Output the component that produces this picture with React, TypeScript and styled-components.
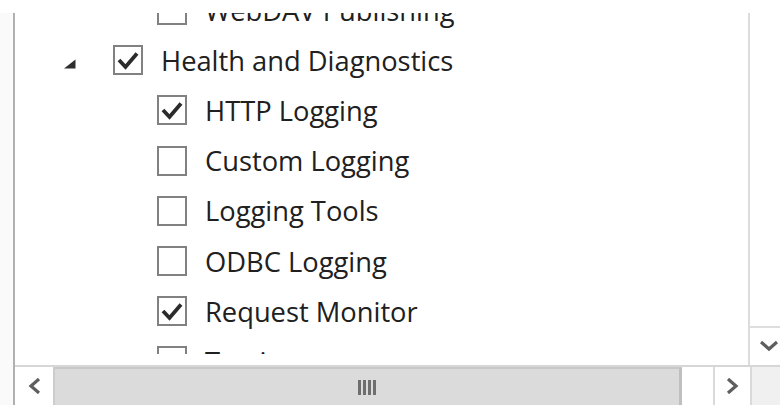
import React from "react";
import styled, { createGlobalStyle } from "styled-components";

const GlobalStyle = createGlobalStyle`
  html, body {
    margin: 0;
    padding: 0;
    background: #ffffff;
  }
  body {
    font-family: "Open Sans", "Noto Sans", "DejaVu Sans", sans-serif;
  }
`;

const Page = styled.div`
  width: 780px;
  height: 405px;
  padding-top: 13px;
  box-sizing: border-box;
  display: flex;
  background: #ffffff;
  overflow: hidden;
`;

const Gutter = styled.div`
  width: 13px;
  flex-shrink: 0;
  background: #fafafa;
`;

const Panel = styled.div`
  flex: 1;
  display: grid;
  grid-template-columns: 735px 1fr;
  grid-template-rows: 1fr 40px;
  border-left: 2px solid #b0b0b0;
  overflow: hidden;
`;

const TreeView = styled.div`
  border-right: 2px solid #dcdcdc;
  padding-bottom: 11px;
  display: flex;
  flex-direction: column;
  min-height: 0;
  background: #ffffff;
`;

const Viewport = styled.div`
  flex: 1;
  overflow: hidden;
`;

// list is scrolled a little, so the first row is half hidden
const TreeList = styled.ul`
  list-style: none;
  margin: -28px 0 0 0;
  padding: 0;
`;

const Row = styled.li<{ $level: number }>`
  height: 50.2px;
  display: flex;
  align-items: center;
  padding-left: ${(p) => 48 + p.$level * 44}px;
  box-sizing: border-box;
`;

const Expander = styled.span`
  width: 50px;
  flex-shrink: 0;
  display: flex;
  align-items: center;
  padding-top: 7px;
`;

const Box = styled.span`
  width: 30px;
  height: 30px;
  flex-shrink: 0;
  box-sizing: border-box;
  border: 2px solid #818181;
  background: #ffffff;
  display: flex;
  align-items: center;
  justify-content: center;
  margin-right: 18px;
`;

const Label = styled.span`
  font-size: 27.3px;
  color: #202020;
  white-space: nowrap;
`;

const VScroll = styled.div`
  display: flex;
  flex-direction: column;
  justify-content: flex-end;
  background: #ffffff;
`;

const DownButton = styled.div`
  height: 37px;
  box-sizing: border-box;
  border-top: 2px solid #dedede;
  display: flex;
  align-items: center;
  padding-left: 10px;
  margin-bottom: 2px;
`;

const HScroll = styled.div`
  display: flex;
  border-top: 2px solid #d6d6d6;
  background: #ffffff;
`;

const ArrowButton = styled.div<{ $width: number }>`
  width: ${(p) => p.$width}px;
  flex-shrink: 0;
  display: flex;
  align-items: center;
  justify-content: center;
  background: #ffffff;
`;

const Track = styled.div`
  flex: 1;
  display: flex;
  border-left: 2px solid #cccccc;
  border-right: 2px solid #dadada;
  background: #ffffff;
`;

const Thumb = styled.div`
  width: 627px;
  box-sizing: border-box;
  background: #dbdbdb;
  border-top: 2px solid #c8c8c8;
  border-right: 3px solid #bfbfbf;
  display: flex;
  align-items: center;
  justify-content: center;
  gap: 2px;
`;

const GripBar = styled.span`
  width: 3px;
  height: 15px;
  background: #6e6e6e;
`;

const Corner = styled.div`
  background: #f0f0f0;
  border-top: 2px solid #d6d6d6;
  border-left: 2px solid #dadada;
`;

type Item = { label: string; level: number; checked: boolean; expanded?: boolean };

const items: Item[] = [
  { label: "WebDAV Publishing", level: 1, checked: false },
  { label: "Health and Diagnostics", level: 0, checked: true, expanded: true },
  { label: "HTTP Logging", level: 1, checked: true },
  { label: "Custom Logging", level: 1, checked: false },
  { label: "Logging Tools", level: 1, checked: false },
  { label: "ODBC Logging", level: 1, checked: false },
  { label: "Request Monitor", level: 1, checked: true },
  { label: "Tracing", level: 1, checked: false },
];

const Check = () => (
  <svg width="26" height="26" viewBox="0 0 26 26">
    <path d="M4 13 L10.5 20 L22 6.5" fill="none" stroke="#2b2b2b" strokeWidth="3.8" />
  </svg>
);

const ExpandedGlyph = () => (
  <svg width="13" height="10" viewBox="0 0 13 10">
    <polygon points="1,9.5 12.5,9.5 12.5,0.5" fill="#2e2e2e" />
  </svg>
);

const Chevron = ({ dir }: { dir: "left" | "right" | "down" }) => {
  const d =
    dir === "left"
      ? "M11 1 L3 8 L11 15"
      : dir === "right"
      ? "M2 1 L10 8 L2 15"
      : "M1 3 L9 10 L17 3";
  const w = dir === "down" ? 18 : 13;
  const h = dir === "down" ? 13 : 16;
  return (
    <svg width={w} height={h} viewBox={`0 0 ${w} ${h}`}>
      <path d={d} fill="none" stroke="#5e5e5e" strokeWidth="3.2" />
    </svg>
  );
};

const App: React.FC = () => {
  return (
    <>
      <GlobalStyle />
      <Page>
        <Gutter />
        <Panel>
          <TreeView>
            <Viewport>
              <TreeList>
                {items.map((item) => (
                  <Row key={item.label} $level={item.level}>
                    <Expander>{item.expanded && <ExpandedGlyph />}</Expander>
                    <Box>{item.checked && <Check />}</Box>
                    <Label>{item.label}</Label>
                  </Row>
                ))}
              </TreeList>
            </Viewport>
          </TreeView>
          <VScroll>
            <DownButton>
              <Chevron dir="down" />
            </DownButton>
          </VScroll>
          <HScroll>
            <ArrowButton $width={38}>
              <Chevron dir="left" />
            </ArrowButton>
            <Track>
              <Thumb>
                <GripBar />
                <GripBar />
                <GripBar />
                <GripBar />
              </Thumb>
            </Track>
            <ArrowButton $width={35}>
              <Chevron dir="right" />
            </ArrowButton>
          </HScroll>
          <Corner />
        </Panel>
      </Page>
    </>
  );
};

export default App;
